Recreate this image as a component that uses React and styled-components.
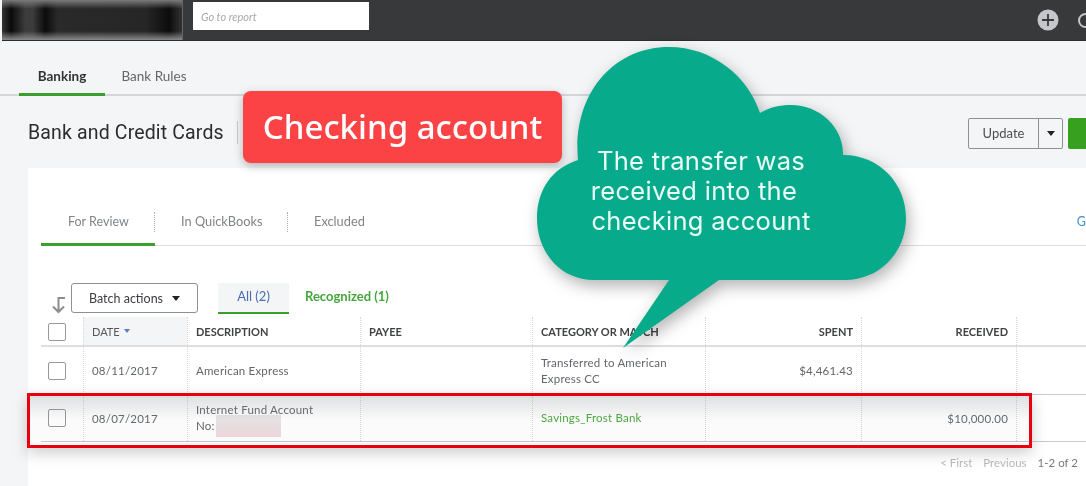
import styled, { createGlobalStyle } from "styled-components";

const COLS = "42px 104px 173px 172px 173px 156px 155px 1fr";

const rows = [
  {
    date: "08/11/2017",
    description: ["American Express"],
    category: ["Transferred to American", "Express CC"],
    spent: "$4,461.43",
    received: "",
  },
  {
    date: "08/07/2017",
    description: ["Internet Fund Account"],
    masked: true,
    category: ["Savings_Frost Bank"],
    matched: true,
    spent: "",
    received: "$10,000.00",
  },
];

const App = () => {
  return (
    <Page>
      <GlobalStyle />
      <TopBar>
        <BlurredLogo />
        <Search>Go to report</Search>
        <TopIcons>
          <PlusIcon>
            <svg width="22" height="22" viewBox="0 0 22 22">
              <circle cx="11" cy="11" r="10.5" fill="#c4c6cb" />
              <path d="M11 5v12M5 11h12" stroke="#38393b" strokeWidth="1.8" />
            </svg>
          </PlusIcon>
          <CutIcon />
        </TopIcons>
      </TopBar>

      <SubNav>
        <SubTab $active>Banking</SubTab>
        <SubTab>Bank Rules</SubTab>
      </SubNav>

      <TitleRow>
        <Title>Bank and Credit Cards</Title>
        <TitleRule />
        <Actions>
          <SplitButton>
            <SplitLabel>Update</SplitLabel>
            <SplitCaret>
              <Caret />
            </SplitCaret>
          </SplitButton>
          <GreenButton />
        </Actions>
      </TitleRow>

      <Card>
        <ReviewTabs>
          <ReviewTab $active>For Review</ReviewTab>
          <ReviewTab $wide>In QuickBooks</ReviewTab>
          <ReviewTab $last>Excluded</ReviewTab>
          <GoLink>G</GoLink>
        </ReviewTabs>

        <Toolbar>
          <BatchArrow>
            <svg width="16" height="18" viewBox="0 0 16 18" fill="none" stroke="#8b8d90" strokeWidth="2">
              <path d="M14 2H7.5V16M2 10.5 7.5 16 13 10.5" />
            </svg>
          </BatchArrow>
          <BatchButton>
            Batch actions
            <Caret />
          </BatchButton>
          <Filter $active>All (2)</Filter>
          <Filter>Recognized (1)</Filter>
        </Toolbar>

        <Table>
          <HeadRow>
            <CheckCell $head>
              <Check />
            </CheckCell>
            <HeadCell $sorted>
              DATE <SortMark />
            </HeadCell>
            <HeadCell $strong>DESCRIPTION</HeadCell>
            <HeadCell $strong>PAYEE</HeadCell>
            <HeadCell $strong>CATEGORY OR MATCH</HeadCell>
            <HeadCell $strong $right>SPENT</HeadCell>
            <HeadCell $strong $right>RECEIVED</HeadCell>
            <HeadCell />
          </HeadRow>
          {rows.map((row) => (
            <Row key={row.date} $first={!row.masked}>
              <CheckCell>
                <Check />
              </CheckCell>
              <Cell>{row.date}</Cell>
              <Cell>
                <div>
                  {row.description.map((line) => (
                    <Line key={line}>{line}</Line>
                  ))}
                  {row.masked && (
                    <Line>
                      No:<Masked />
                    </Line>
                  )}
                </div>
              </Cell>
              <Cell />
              <Cell $green={row.matched}>
                <div>
                  {row.category.map((line) => (
                    <Line key={line}>{line}</Line>
                  ))}
                </div>
              </Cell>
              <Cell $right>{row.spent}</Cell>
              <Cell $right>{row.received}</Cell>
              <Cell />
            </Row>
          ))}
          <Highlight />
        </Table>

        <Pager>
          <PagerLink>&lt; First</PagerLink>
          <PagerLink>Previous</PagerLink>
          <span>1-2 of 2</span>
        </Pager>
      </Card>

      <RedLabel>Checking account</RedLabel>

      <Bubble>
        <svg width="372" height="304" viewBox="535 46 372 304">
          <path
            d="M578 160C572 96 612 47 669 47C712 47 748 76 760 113C770 107 780 105 791 105C820 105 844 128 843 155C880 155 906 184 906 218C906 252 880 280 845 280L719 280L623 348L669 280L594 280C560 280 537 252 537 218C537 190 552 168 578 160Z"
            fill="#07ab8b"
          />
        </svg>
        <BubbleText>
          <BubbleLine>The transfer was</BubbleLine>
          <BubbleLine $shift="-7px">received into the</BubbleLine>
          <BubbleLine>checking account</BubbleLine>
        </BubbleText>
      </Bubble>
    </Page>
  );
};

const GlobalStyle = createGlobalStyle`
  html, body {
    margin: 0;
    padding: 0;
    background: #fff;
  }
  * {
    box-sizing: border-box;
  }
`;

const Page = styled.div`
  position: relative;
  width: 1086px;
  height: 486px;
  overflow: hidden;
  background: #f3f5f6;
  font-family: Lato, "Liberation Sans", sans-serif;
  color: #5f6266;
  filter: blur(0.35px);
`;

const TopBar = styled.header`
  display: flex;
  align-items: flex-start;
  height: 41px;
  margin-left: 2px;
  background: #38393b;
  border-bottom: 1px solid #2c2d2e;
`;

const BlurredLogo = styled.div`
  width: 181px;
  height: 40px;
  background:
    linear-gradient(#7a7a7a, rgba(90, 90, 90, 0) 22%, rgba(90, 90, 90, 0) 78%, #8a8a8a),
    linear-gradient(
      90deg,
      #333 0,
      #0a0a0a 5%,
      #3c3c3c 13%,
      #3c3c3c 17%,
      #0c0c0c 24%,
      #2a2a2a 31%,
      #262626 80%,
      #0c0c0c 93%,
      #333 100%
    );
  border-right: 1px solid #666;
`;

const Search = styled.div`
  width: 176px;
  height: 28px;
  margin: 2px 0 0 10px;
  padding: 0 8px;
  background: #fff;
  font-style: italic;
  font-size: 11px;
  line-height: 29px;
  color: #a7a9ac;
`;

const TopIcons = styled.div`
  display: flex;
  align-items: center;
  gap: 19px;
  margin-left: auto;
  height: 40px;
  margin-right: -7px;
`;

const PlusIcon = styled.span`
  display: flex;
  width: 22px;
  height: 22px;
  margin-left: -1px;
`;

const CutIcon = styled.span`
  width: 15px;
  height: 15px;
  border: 2px solid #c4c6cb;
  border-radius: 50%;
`;

const SubNav = styled.nav`
  display: flex;
  height: 55px;
  padding: 0 0 0 19px;
  box-shadow: inset 0 -2px 0 #d4d7da;
`;

const SubTab = styled.div`
  display: flex;
  align-items: center;
  justify-content: center;
  width: ${(p) => (p.$active ? "86px" : "98px")};
  padding-top: 17px;
  font-size: 13.5px;
  color: ${(p) => (p.$active ? "#333" : "#666")};
  font-weight: ${(p) => (p.$active ? 700 : 400)};
  border-bottom: 3px solid ${(p) => (p.$active ? "#39a02e" : "transparent")};
`;

const TitleRow = styled.div`
  display: flex;
  align-items: center;
  height: 72px;
  padding: 0 0 0 28px;
`;

const Title = styled.h1`
  margin: 0;
  font-family: Roboto, sans-serif;
  font-size: 19.5px;
  font-weight: 400;
  letter-spacing: 0.15px;
  color: #2b2c2e;
`;

const TitleRule = styled.span`
  width: 1px;
  height: 23px;
  margin-left: 13px;
  background: #c9cccf;
`;

const Actions = styled.div`
  display: flex;
  gap: 5px;
  margin: 2px -46px 0 auto;
`;

const SplitButton = styled.div`
  display: flex;
  width: 95px;
  height: 31px;
  border: 1px solid #8d9096;
  border-radius: 2px;
`;

const SplitLabel = styled.div`
  flex: 1;
  text-align: center;
  font-size: 13px;
  line-height: 29px;
  color: #4c4f52;
`;

const SplitCaret = styled.div`
  display: flex;
  align-items: center;
  justify-content: center;
  width: 24px;
  border-left: 1px solid #8d9096;
`;

const Caret = styled.span`
  display: inline-block;
  width: 0;
  height: 0;
  border-left: 4px solid transparent;
  border-right: 4px solid transparent;
  border-top: 5px solid #222;
`;

const GreenButton = styled.div`
  width: 64px;
  height: 31px;
  border-radius: 2px;
  background: #38a01f;
`;

const Card = styled.main`
  height: 318px;
  margin-left: 28px;
  padding: 0 0 0 13px;
  background: #fff;
`;

const ReviewTabs = styled.div`
  display: flex;
  height: 78px;
  padding-top: 32px;
  box-shadow: inset 0 -1px 0 #dcdee0;
`;

const ReviewTab = styled.div`
  position: relative;
  width: ${(p) => (p.$active ? "114px" : p.$wide ? "133px" : "auto")};
  height: 46px;
  padding-left: ${(p) => (p.$active ? "27px" : "26px")};
  font-size: ${(p) => (p.$active ? "12.5px" : "12.8px")};
  line-height: 43px;
  color: #818488;
  border-bottom: 3px solid ${(p) => (p.$active ? "#39a02e" : "transparent")};

  &::after {
    content: "";
    display: ${(p) => (p.$last ? "none" : "block")};
    position: absolute;
    right: 0;
    top: 12px;
    height: 20px;
    border-right: 1px dotted #a8aaad;
  }
`;

const GoLink = styled.div`
  margin-left: auto;
  font-size: 12.5px;
  line-height: 43px;
  color: #3f8fd0;
`;

const Toolbar = styled.div`
  display: flex;
  align-items: flex-end;
  height: 68px;
`;

const BatchArrow = styled.span`
  display: flex;
  width: 30px;
  padding: 0 0 0 10px;
`;

const BatchButton = styled.div`
  display: flex;
  align-items: center;
  justify-content: center;
  gap: 9px;
  width: 127px;
  height: 30px;
  margin-bottom: 1px;
  border: 1px solid #8d9096;
  border-radius: 3px;
  font-size: 12.5px;
  color: #3b3d40;
`;

const Filter = styled.div`
  height: 31px;
  margin-left: ${(p) => (p.$active ? "20px" : "16px")};
  width: ${(p) => (p.$active ? "71px" : "auto")};
  text-align: center;
  font-size: 13px;
  line-height: 27px;
  font-weight: ${(p) => (p.$active ? 400 : 700)};
  color: ${(p) => (p.$active ? "#4a6cb3" : "#46a63c")};
  background: ${(p) => (p.$active ? "#f3f5f7" : "none")};
  border-bottom: 2px solid ${(p) => (p.$active ? "#39a02e" : "transparent")};
`;

const Table = styled.div`
  position: relative;
  margin-top: 3px;
`;

const HeadRow = styled.div`
  display: grid;
  grid-template-columns: ${COLS};
  height: 30px;
  border-bottom: 2px solid #dcdee0;
`;

const Row = styled.div`
  display: grid;
  grid-template-columns: ${COLS};
  height: ${(p) => (p.$first ? "48px" : "47px")};
  border-bottom: 1px solid #c8cacc;
`;

const CheckCell = styled.div`
  display: flex;
  align-items: center;
  padding: ${(p) => (p.$head ? "2px 0 0 7px" : "0 0 0 7px")};
`;

const Check = styled.span`
  width: 18px;
  height: 18px;
  border: 1px solid #94979b;
  border-radius: 2px;
  background: #fff;
`;

const HeadCell = styled.div`
  display: flex;
  align-items: center;
  justify-content: ${(p) => (p.$right ? "flex-end" : "flex-start")};
  gap: 4px;
  padding: 0 8px;
  font-size: 11px;
  font-weight: ${(p) => (p.$strong ? 700 : 400)};
  color: ${(p) => (p.$strong ? "#414345" : "#55585b")};
  background: ${(p) => (p.$sorted ? "#f3f5f7" : "none")};
  border-left: 1px dotted #d4d6d8;
`;

const SortMark = styled.span`
  width: 0;
  height: 0;
  border-left: 3px solid transparent;
  border-right: 3px solid transparent;
  border-top: 4px solid #5b7fb8;
`;

const Cell = styled.div`
  display: flex;
  align-items: center;
  justify-content: ${(p) => (p.$right ? "flex-end" : "flex-start")};
  padding: 0 8px;
  font-size: 11.5px;
  letter-spacing: 0.2px;
  color: ${(p) => (p.$green ? "#49a73e" : "#63666a")};
  border-left: 1px dotted #d4d6d8;
`;

const Line = styled.div`
  display: flex;
  line-height: 16px;
`;

const Masked = styled.span`
  width: 65px;
  height: 22px;
  margin: -3px 0 -3px 1px;
  background: linear-gradient(#e6e6e8, #efd9dd);
`;

const Highlight = styled.div`
  position: absolute;
  left: -14px;
  right: 54px;
  top: 76px;
  height: 55px;
  border: 3px solid #e8000f;
  background: linear-gradient(rgba(120, 125, 130, 0.24), rgba(130, 135, 140, 0.03) 50%);
  box-shadow: 0 5px 14px rgba(0, 0, 0, 0.2);
  pointer-events: none;
`;

const Pager = styled.div`
  display: flex;
  justify-content: flex-end;
  gap: 11px;
  padding: 14px 8px 0 0;
  font-size: 11.5px;
  color: #75787c;
`;

const PagerLink = styled.span`
  color: #b8babd;
`;

const RedLabel = styled.div`
  position: absolute;
  left: 243px;
  top: 91px;
  width: 319px;
  height: 72px;
  border-radius: 8px;
  background: #fb4244;
  box-shadow: 0 3px 10px rgba(0, 0, 0, 0.28);
  text-align: center;
  font-family: "Noto Sans", sans-serif;
  font-weight: 500;
  font-size: 33px;
  line-height: 72px;
  color: #fff;
`;

const Bubble = styled.div`
  position: absolute;
  left: 535px;
  top: 46px;
  width: 372px;
  height: 304px;

  svg {
    display: block;
    filter: drop-shadow(3px 6px 8px rgba(0, 0, 0, 0.3));
  }
`;

const BubbleText = styled.div`
  position: absolute;
  left: 0;
  top: 100px;
  width: 332px;
  font-family: Inter, sans-serif;
  font-size: 25.5px;
  line-height: 30px;
  letter-spacing: 0.3px;
  text-align: center;
  color: #eafcf6;
`;

const BubbleLine = styled.div`
  transform: translateX(${(p) => p.$shift || "0"});
`;

export default App;
